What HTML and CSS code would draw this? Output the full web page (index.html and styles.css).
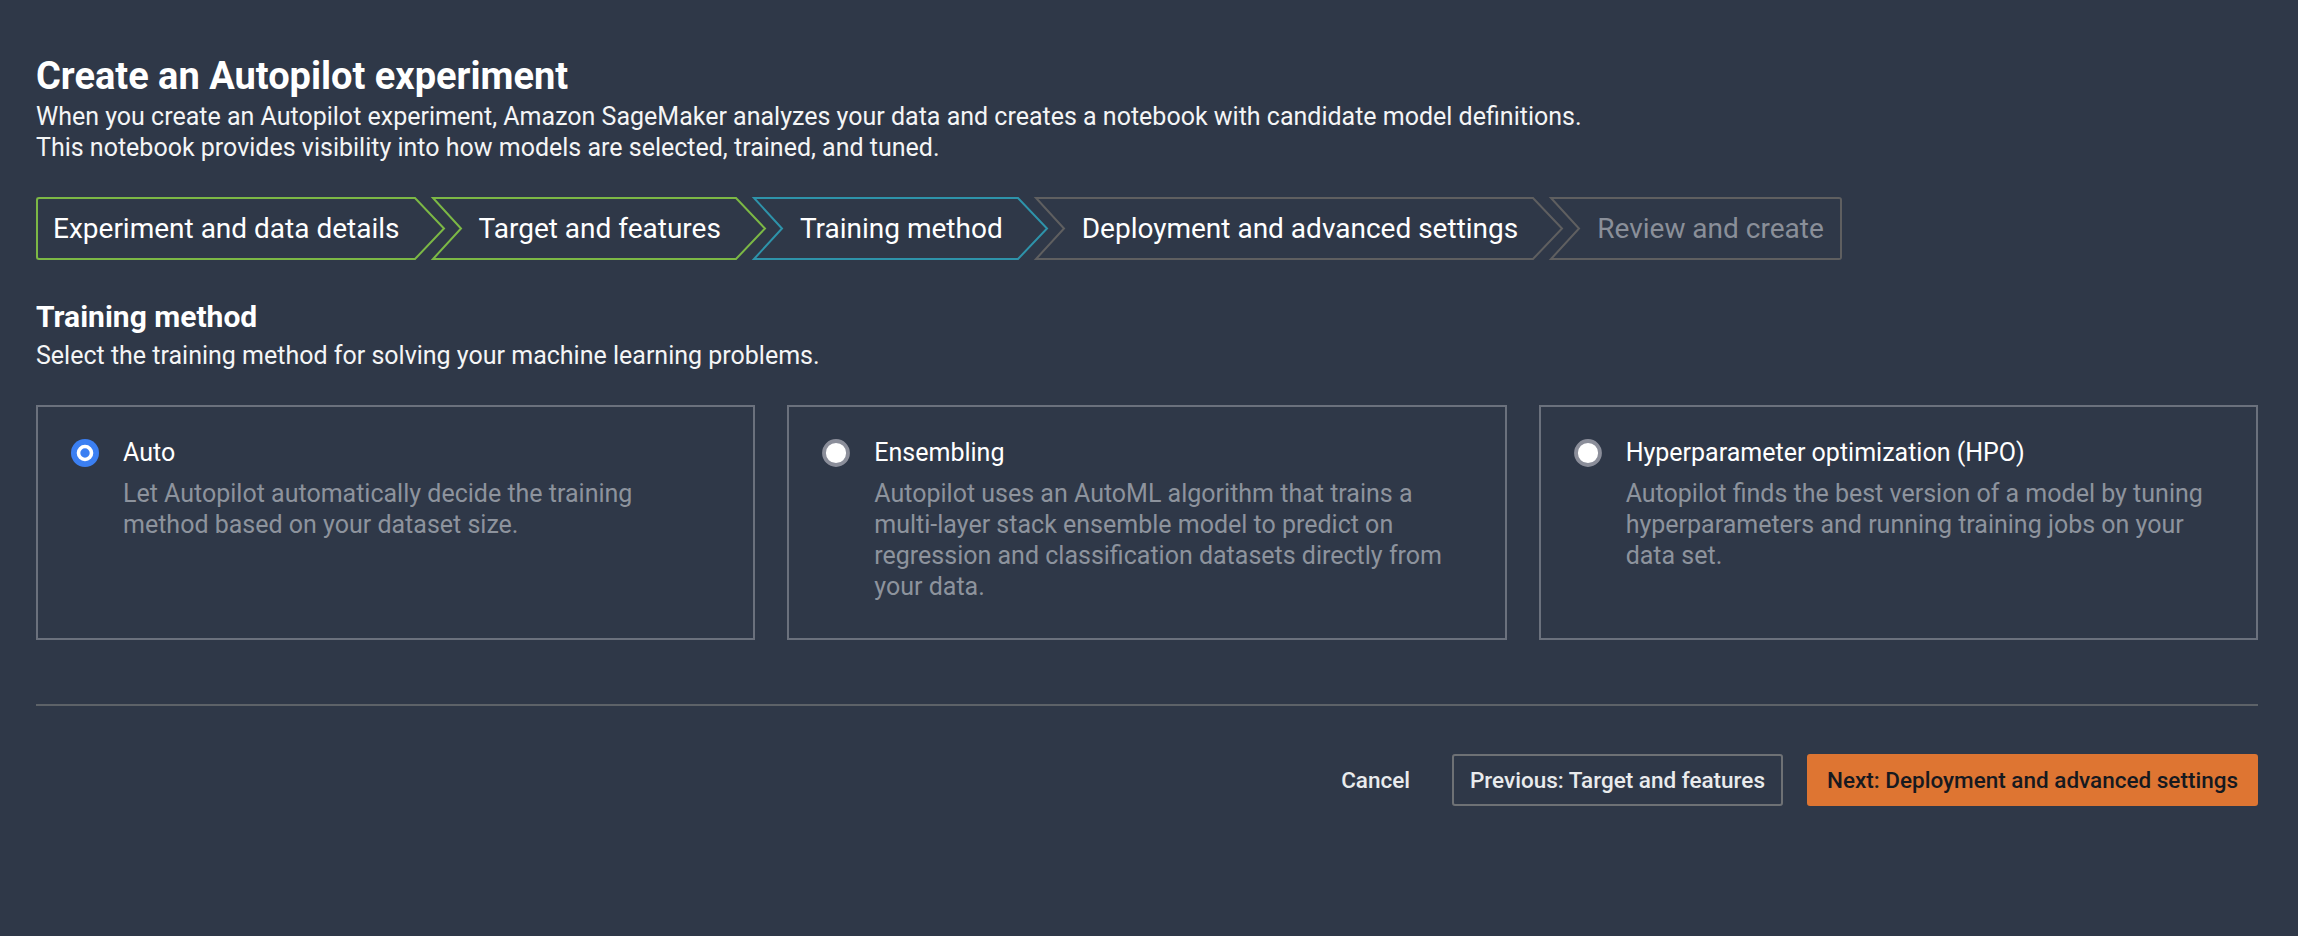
FILE: index.html
```html
<!DOCTYPE html>
<html lang="en">
<head>
<meta charset="utf-8">
<title>Create an Autopilot experiment</title>
<link rel="stylesheet" href="styles.css">
</head>
<body>
<main class="page">
  <h1 class="title">Create an Autopilot experiment</h1>
  <p class="intro">When you create an Autopilot experiment, Amazon SageMaker analyzes your data and creates a notebook with candidate model definitions.<br>This notebook provides visibility into how models are selected, trained, and tuned.</p>

  <nav class="steps">
    <div class="step step-done step-first">
      <div class="step-mid">Experiment and data details</div>
      <svg class="cap cap-right" width="31" height="63" viewBox="0 0 31 63"><path d="M0 1 H1 L30 31.5 L1 62 H0"/></svg>
    </div>
    <div class="step step-done">
      <svg class="cap cap-left" width="30" height="63" viewBox="0 0 30 63"><path d="M30 1 H1 L29 31.5 L1 62 H30"/></svg>
      <div class="step-mid">Target and features</div>
      <svg class="cap cap-right" width="31" height="63" viewBox="0 0 31 63"><path d="M0 1 H1 L30 31.5 L1 62 H0"/></svg>
    </div>
    <div class="step step-current">
      <svg class="cap cap-left" width="30" height="63" viewBox="0 0 30 63"><path d="M30 1 H1 L29 31.5 L1 62 H30"/></svg>
      <div class="step-mid">Training method</div>
      <svg class="cap cap-right" width="31" height="63" viewBox="0 0 31 63"><path d="M0 1 H1 L30 31.5 L1 62 H0"/></svg>
    </div>
    <div class="step step-todo">
      <svg class="cap cap-left" width="30" height="63" viewBox="0 0 30 63"><path d="M30 1 H1 L29 31.5 L1 62 H30"/></svg>
      <div class="step-mid">Deployment and advanced settings</div>
      <svg class="cap cap-right" width="31" height="63" viewBox="0 0 31 63"><path d="M0 1 H1 L30 31.5 L1 62 H0"/></svg>
    </div>
    <div class="step step-todo step-disabled step-last">
      <svg class="cap cap-left" width="30" height="63" viewBox="0 0 30 63"><path d="M30 1 H1 L29 31.5 L1 62 H30"/></svg>
      <div class="step-mid">Review and create</div>
    </div>
  </nav>

  <h2 class="section-title">Training method</h2>
  <p class="section-desc">Select the training method for solving your machine learning problems.</p>

  <div class="cards">
    <div class="card">
      <svg class="radio" width="28" height="28" viewBox="0 0 28 28"><circle cx="14" cy="14" r="14" fill="#3b7ff2"/><circle cx="14" cy="14" r="6.5" fill="#3b7ff2" stroke="#ffffff" stroke-width="3.6"/></svg>
      <div class="card-body">
        <div class="card-label">Auto</div>
        <div class="card-text">Let Autopilot automatically decide the training method based on your dataset size.</div>
      </div>
    </div>
    <div class="card">
      <svg class="radio" width="28" height="28" viewBox="0 0 28 28"><circle cx="14" cy="14" r="12" fill="#ffffff" stroke="#8b8e9a" stroke-width="3.8"/></svg>
      <div class="card-body">
        <div class="card-label">Ensembling</div>
        <div class="card-text">Autopilot uses an AutoML algorithm that trains a multi-layer stack ensemble model to predict on regression and classification datasets directly from your data.</div>
      </div>
    </div>
    <div class="card">
      <svg class="radio" width="28" height="28" viewBox="0 0 28 28"><circle cx="14" cy="14" r="12" fill="#ffffff" stroke="#8b8e9a" stroke-width="3.8"/></svg>
      <div class="card-body">
        <div class="card-label">Hyperparameter optimization (HPO)</div>
        <div class="card-text">Autopilot finds the best version of a model by tuning hyperparameters and running training jobs on your data set.</div>
      </div>
    </div>
  </div>

  <hr class="divider">

  <div class="actions">
    <button class="btn btn-link" type="button">Cancel</button>
    <button class="btn btn-normal" type="button">Previous: Target and features</button>
    <button class="btn btn-primary" type="button">Next: Deployment and advanced settings</button>
  </div>
</main>
</body>
</html>
```
FILE: styles.css
```css
* {
  box-sizing: border-box;
}

html, body {
  margin: 0;
  background: #2f3848;
}

body {
  font-family: Roboto, "Liberation Sans", Arial, sans-serif;
  color: #ffffff;
  -webkit-font-smoothing: antialiased;
}

.page {
  padding: 56px 40px 40px 36px;
}

.title {
  margin: 0;
  font-size: 38px;
  line-height: 40px;
  font-weight: 700;
  color: #ffffff;
}

.intro {
  margin: 5px 0 0 0;
  font-size: 25px;
  line-height: 31px;
  color: #f4f5f6;
}

/* Steps bar */
.steps {
  display: flex;
  align-items: stretch;
  margin-top: 34px;
  height: 63px;
}

.step {
  display: flex;
  align-items: stretch;
  height: 63px;
  --c: #5f5f60;
}

.step + .step {
  margin-left: -13px;
}

.step-done { --c: #7cb845; }
.step-current { --c: #2e93aa; }
.step-todo { --c: #5f5f60; }

.cap {
  display: block;
  flex: none;
  overflow: visible;
}

.cap path {
  fill: none;
  stroke: var(--c);
  stroke-width: 2;
  stroke-linejoin: miter;
}

.step-mid {
  display: flex;
  align-items: center;
  border-top: 2px solid var(--c);
  border-bottom: 2px solid var(--c);
  padding: 0 14px 0 17px;
  font-size: 28px;
  color: #ffffff;
  white-space: nowrap;
}

.step-first .step-mid {
  border-left: 2px solid var(--c);
  border-radius: 3px 0 0 3px;
  padding-left: 15px;
}

.step-last .step-mid {
  border-right: 2px solid var(--c);
  border-radius: 0 3px 3px 0;
  padding-right: 16px;
}

.step-disabled .step-mid {
  color: #8a8f99;
}

/* Section */
.section-title {
  margin: 40px 0 0 0;
  font-size: 30px;
  line-height: 34px;
  font-weight: 700;
}

.section-desc {
  margin: 6px 0 0 0;
  font-size: 25px;
  line-height: 31px;
  color: #f4f5f6;
}

.cards {
  display: grid;
  grid-template-columns: repeat(3, 1fr);
  gap: 32px;
  margin-top: 34px;
}

.card {
  display: flex;
  align-items: flex-start;
  gap: 24px;
  border: 2px solid #6b717d;
  padding: 30px 32px 36px 33px;
}

.radio {
  flex: none;
  display: block;
  margin-top: 2px;
}

.card-body {
  flex: 1;
  max-width: 592px;
}

.card-label {
  font-size: 25px;
  line-height: 31px;
  color: #ffffff;
}

.card-text {
  margin-top: 10px;
  font-size: 25px;
  line-height: 31px;
  color: #8d939d;
}

.divider {
  margin: 64px 0 0 0;
  border: 0;
  border-top: 2px solid #5d6268;
}

.actions {
  display: flex;
  justify-content: flex-end;
  align-items: center;
  gap: 24px;
  margin-top: 48px;
}

.btn {
  font-family: inherit;
  font-size: 22.5px;
  font-weight: 500;
  height: 52px;
  border-radius: 3px;
  border: 2px solid transparent;
  white-space: nowrap;
  cursor: pointer;
}

.btn-link {
  background: transparent;
  color: #e9ebed;
  padding: 0 16px;
}

.btn-normal {
  background: transparent;
  border-color: #6e7175;
  color: #e9ebed;
  padding: 0 16px;
}

.btn-primary {
  background: #de7532;
  border-color: #de7532;
  color: #16191f;
  padding: 0 18px;
}
```
